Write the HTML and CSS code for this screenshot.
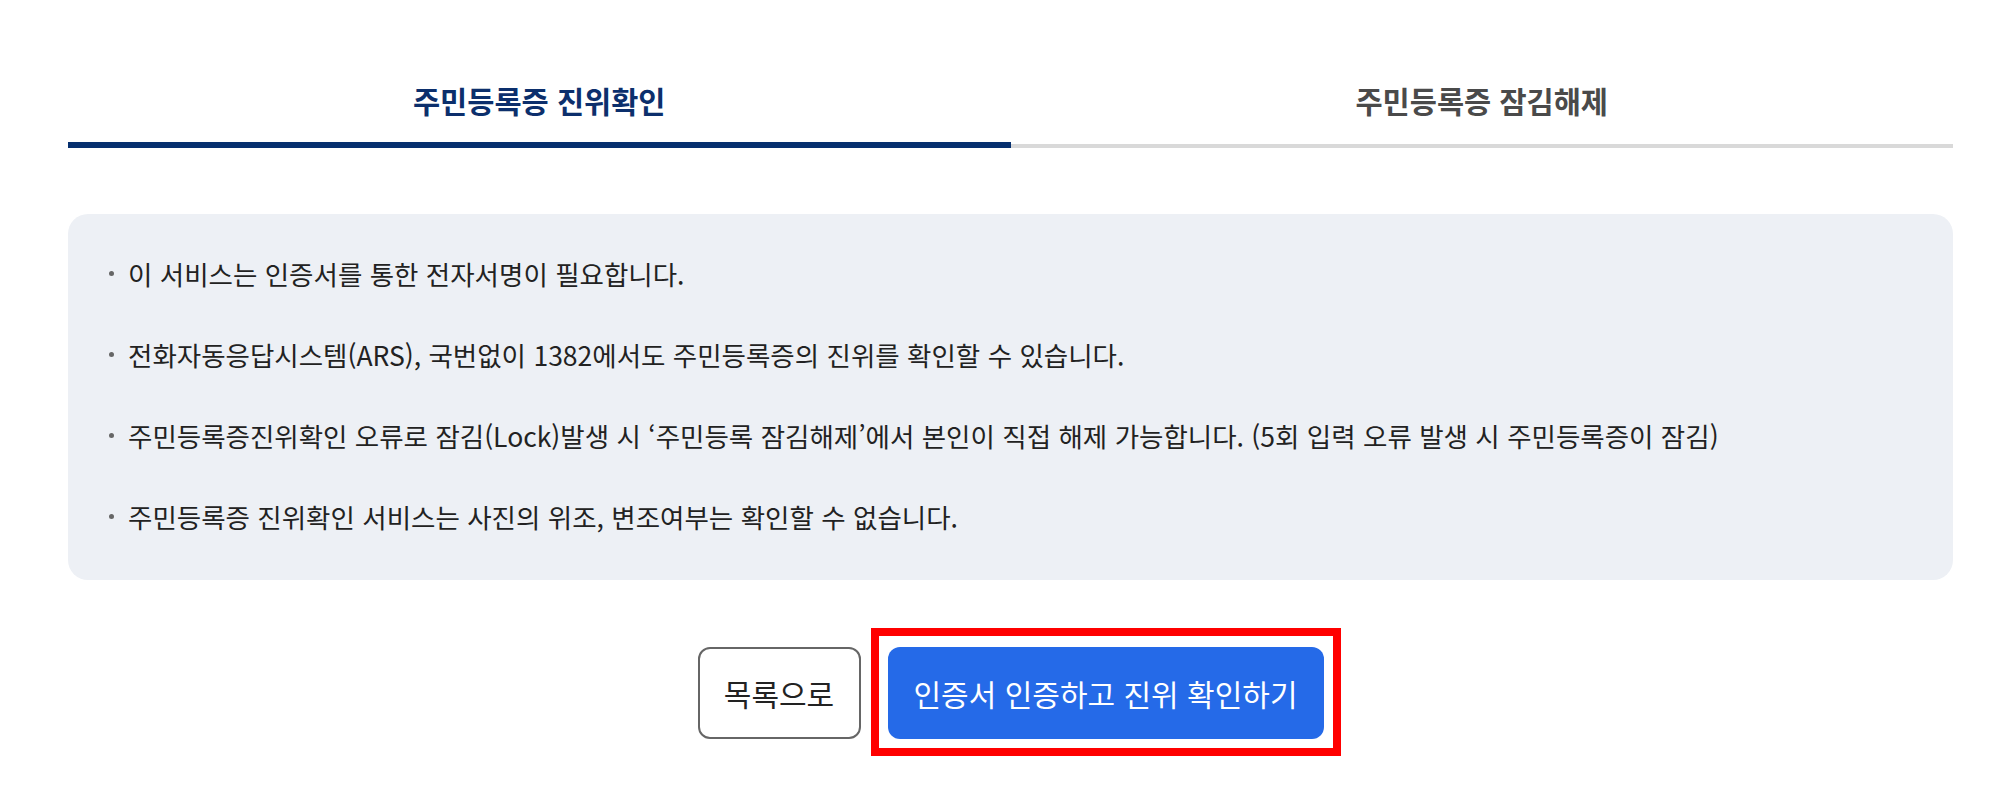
FILE: index.html
```html
<!DOCTYPE html>
<html lang="ko">
<head>
    <meta charset="UTF-8">
    <meta name="viewport" content="width=device-width, initial-scale=1.0">
    <title>주민등록증 진위확인</title>
    <link rel="stylesheet" href="styles.css">
</head>
<body>
    <div class="container">
        <div class="tabs">
            <a class="tab active" href="#">주민등록증 진위확인</a>
            <a class="tab" href="#">주민등록증 잠김해제</a>
        </div>

        <ul class="notice">
            <li>이 서비스는 인증서를 통한 전자서명이 필요합니다.</li>
            <li>전화자동응답시스템(ARS), 국번없이 1382에서도 주민등록증의 진위를 확인할 수 있습니다.</li>
            <li>주민등록증진위확인 오류로 잠김(Lock)발생 시 ‘주민등록 잠김해제’에서 본인이 직접 해제 가능합니다. (5회 입력 오류 발생 시 주민등록증이 잠김)</li>
            <li>주민등록증 진위확인 서비스는 사진의 위조, 변조여부는 확인할 수 없습니다.</li>
        </ul>

        <div class="buttons">
            <button type="button" class="btn btn-line">목록으로</button>
            <div class="highlight">
                <button type="button" class="btn btn-primary">인증서 인증하고 진위 확인하기</button>
            </div>
        </div>
    </div>
</body>
</html>
```

FILE: styles.css
```css
body {
    font-family: "Noto Sans CJK KR", "Noto Sans", sans-serif;
    margin: 0;
    padding: 0 0 56px;
    background-color: #fff;
    color: #222;
}
.container {
    margin: 0 47px 0 68px;
}
.tabs {
    display: flex;
    align-items: flex-end;
    padding-top: 80px;
}
.tab {
    flex: 1;
    text-align: center;
    font-size: 29.5px;
    font-weight: bold;
    line-height: 40px;
    color: #4a4a4a;
    text-decoration: none;
    padding-bottom: 24px;
    border-bottom: 4px solid #d9d9d9;
}
.tab.active {
    color: #0c2f6c;
    padding-bottom: 22px;
    border-bottom: 6px solid #06306f;
}
.notice {
    list-style: none;
    margin: 66px 0 0;
    padding: 19px 40px 23px;
    background-color: #edf0f5;
    border-radius: 20px;
}
.notice li {
    position: relative;
    padding-left: 20px;
    font-size: 26.5px;
    line-height: 81px;
    color: #222;
}
.notice li::before {
    content: "";
    position: absolute;
    left: 1px;
    top: 38px;
    width: 5px;
    height: 5px;
    border-radius: 50%;
    background-color: #666;
}
.buttons {
    display: flex;
    justify-content: center;
    gap: 27px;
    margin-top: 67px;
}
.btn {
    font-family: inherit;
    font-size: 30px;
    height: 92px;
    border-radius: 12px;
    cursor: pointer;
}
.btn-line {
    width: 163px;
    background-color: #fff;
    color: #222;
    border: 2px solid #666;
}
.btn-primary {
    width: 436px;
    background-color: #256ae8;
    color: #fff;
    border: none;
}
.highlight {
    position: relative;
}
.highlight::after {
    content: "";
    position: absolute;
    top: -19px;
    left: -17px;
    right: -17px;
    bottom: -17px;
    border: 8px solid #ff0000;
    pointer-events: none;
}
```
